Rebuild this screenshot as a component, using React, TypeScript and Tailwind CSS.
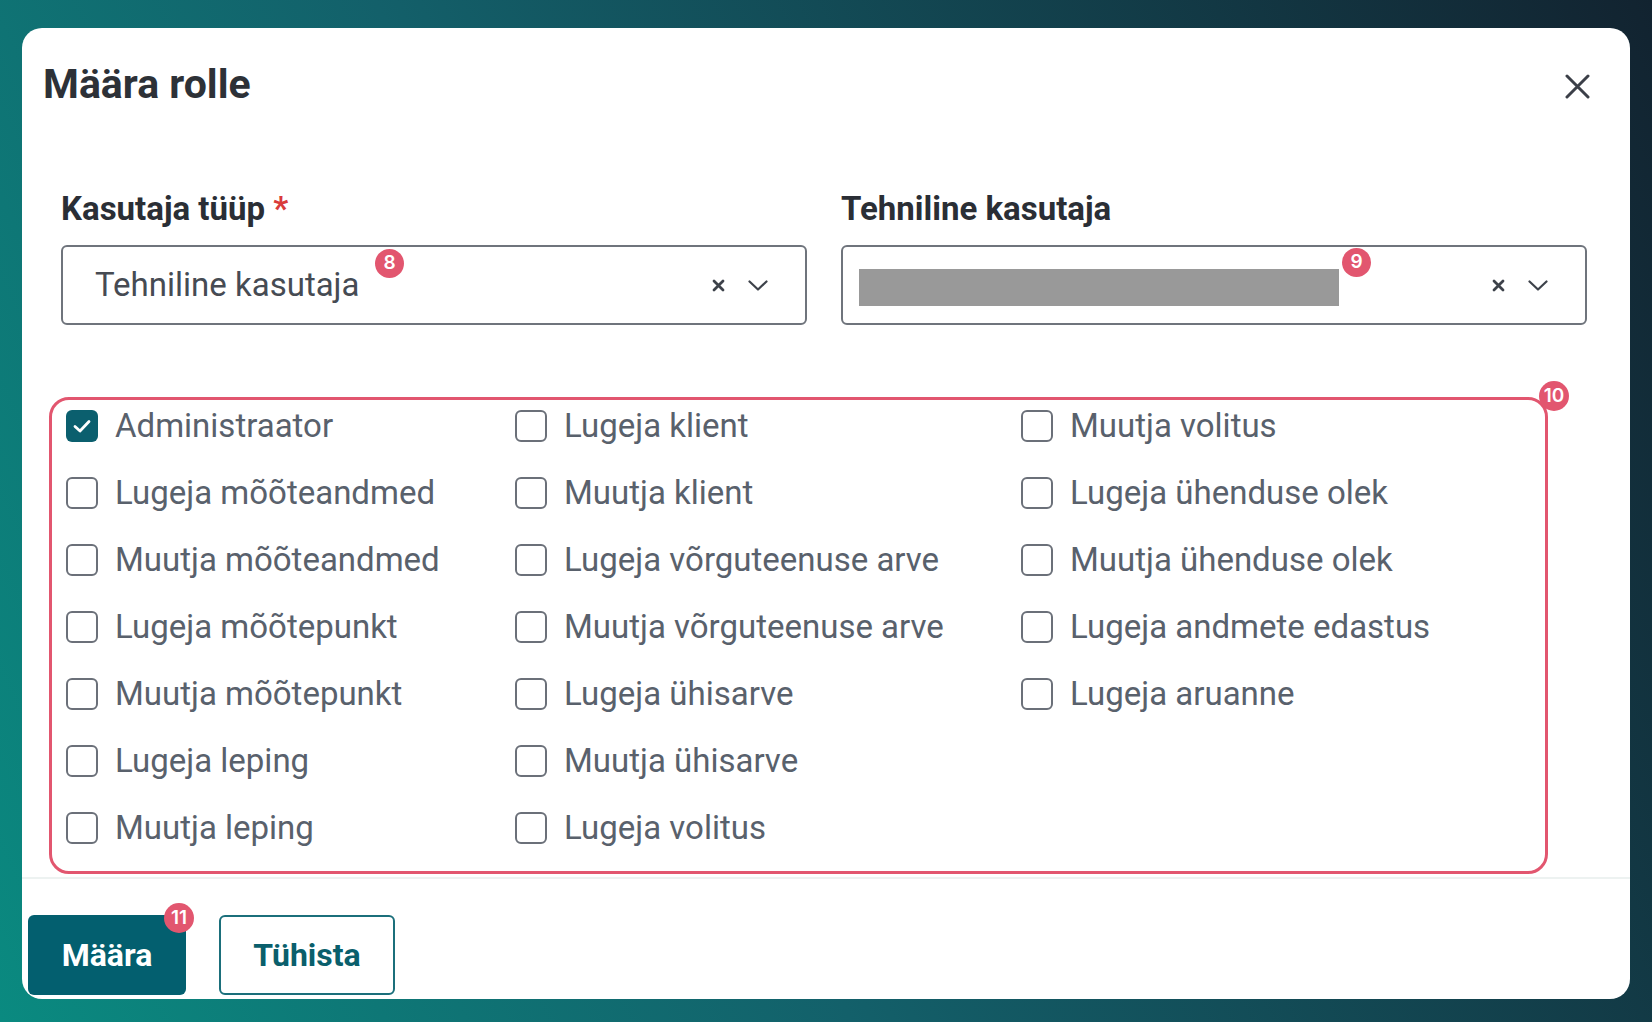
import { Fragment } from "react";

const roles: { label: string; checked?: boolean }[] = [
  { label: "Administraator", checked: true },
  { label: "Lugeja mõõteandmed" },
  { label: "Muutja mõõteandmed" },
  { label: "Lugeja mõõtepunkt" },
  { label: "Muutja mõõtepunkt" },
  { label: "Lugeja leping" },
  { label: "Muutja leping" },
  { label: "Lugeja klient" },
  { label: "Muutja klient" },
  { label: "Lugeja võrguteenuse arve" },
  { label: "Muutja võrguteenuse arve" },
  { label: "Lugeja ühisarve" },
  { label: "Muutja ühisarve" },
  { label: "Lugeja volitus" },
  { label: "Muutja volitus" },
  { label: "Lugeja ühenduse olek" },
  { label: "Muutja ühenduse olek" },
  { label: "Lugeja andmete edastus" },
  { label: "Lugeja aruanne" },
];

function Badge({ n, className }: { n: string; className: string }) {
  return (
    <span
      className={
        "absolute flex items-center justify-center rounded-full bg-[#e2566f] text-white text-[19px] font-semibold font-['Inter',sans-serif] " +
        className
      }
    >
      {n}
    </span>
  );
}

function SelectIcons() {
  return (
    <div className="flex items-center gap-[23px]">
      <svg width="13" height="13" viewBox="0 0 13 13" className="text-[#3d424a]">
        <path d="M2 2L11 11M11 2L2 11" stroke="currentColor" strokeWidth="2.8" strokeLinecap="round" />
      </svg>
      <svg width="20" height="11" viewBox="0 0 20 11" className="text-[#3d424a]">
        <path d="M1.5 1.5L10 9.5L18.5 1.5" fill="none" stroke="currentColor" strokeWidth="2.2" strokeLinecap="round" strokeLinejoin="round" />
      </svg>
    </div>
  );
}

function Checkbox({ checked }: { checked?: boolean }) {
  if (checked) {
    return (
      <span className="flex h-[32px] w-[32px] shrink-0 items-center justify-center rounded-[6px] bg-[#0b5f6e]">
        <svg width="20" height="16" viewBox="0 0 20 16">
          <path d="M3 8.5L8 13L17 3.5" fill="none" stroke="white" strokeWidth="2.8" strokeLinecap="round" strokeLinejoin="round" />
        </svg>
      </span>
    );
  }
  return <span className="h-[32px] w-[32px] shrink-0 rounded-[6px] border-2 border-[#6b7079] bg-white" />;
}

export default function App() {
  return (
    <div className="h-[1022px] w-full overflow-hidden bg-[linear-gradient(65deg,#0a8a80_0%,#13606a_40%,#122330_100%)] pl-[22px] pt-[28px] font-['Roboto',sans-serif]">
      <div className="flex h-[971px] w-[1608px] flex-col overflow-hidden rounded-[20px] bg-white">
        {/* header */}
        <div className="mt-[32px] flex h-[49px] items-center justify-between pl-[21px] pr-[40px]">
          <h1 className="text-[41px] font-bold leading-[49px] text-[#2d3137]">Määra rolle</h1>
          <svg width="25" height="25" viewBox="0 0 25 25" className="mt-[4px] text-[#3b3f48]">
            <path d="M2 2L23 23M23 2L2 23" stroke="currentColor" strokeWidth="3" strokeLinecap="round" />
          </svg>
        </div>

        {/* body */}
        <div className="pl-[39px] pr-[43px] pt-[80px]">
          <div className="grid grid-cols-2 gap-[34px]">
            <div>
              <div className="text-[33px] font-bold leading-[40px] text-[#2a2e35]">
                Kasutaja tüüp <span className="text-[#d93b3b]">*</span>
              </div>
              <div className="relative mt-[16px] flex h-[80px] items-center justify-between rounded-[6px] border-2 border-[#6f747c] pl-[32px] pr-[37px]">
                <span className="text-[33px] leading-[40px] text-[#464b53]">Tehniline kasutaja</span>
                <SelectIcons />
                <Badge n="8" className="left-[312px] top-[2px] h-[29px] w-[29px]" />
              </div>
            </div>
            <div>
              <div className="text-[33px] font-bold leading-[40px] text-[#2a2e35]">Tehniline kasutaja</div>
              <div className="relative mt-[16px] flex h-[80px] items-center justify-between rounded-[6px] border-2 border-[#6f747c] pl-[16px] pr-[37px]">
                <span className="mt-[4px] h-[37px] w-[480px] bg-[#999999]" />
                <SelectIcons />
                <Badge n="9" className="left-[499px] top-[1px] h-[29px] w-[29px]" />
              </div>
            </div>
          </div>

          <div className="relative ml-[-12px] mt-[72px] w-[1499px] rounded-[20px] border-[3px] border-[#e2566f] pb-[23px] pl-[14px] pt-[6px]">
            <div className="grid grid-flow-col grid-cols-[449px_506px_1fr] grid-rows-[repeat(7,40px)] gap-y-[27px]">
              {roles.map((r) => (
                <Fragment key={r.label}>
                  <label className="flex items-center gap-[17px]">
                    <Checkbox checked={r.checked} />
                    <span className="whitespace-nowrap text-[33px] leading-[40px] text-[#59616c]">{r.label}</span>
                  </label>
                </Fragment>
              ))}
            </div>
            <Badge n="10" className="left-[1487px] top-[-19px] h-[30px] w-[30px]" />
          </div>
        </div>

        <div className="mt-[3px] h-[2px] w-full bg-[#edf2f1]" />

        {/* footer */}
        <div className="flex gap-[33px] pl-[6px] pt-[36px]">
          <button className="relative h-[80px] w-[158px] rounded-[6px] bg-[#035f6f] text-[32px] font-bold text-white">
            Määra
            <Badge n="11" className="left-[136px] top-[-12px] h-[30px] w-[30px]" />
          </button>
          <button className="h-[80px] w-[176px] rounded-[6px] border-2 border-[#1b6f7b] bg-white text-[32px] font-bold text-[#0a5f6c]">
            Tühista
          </button>
        </div>
      </div>
    </div>
  );
}
